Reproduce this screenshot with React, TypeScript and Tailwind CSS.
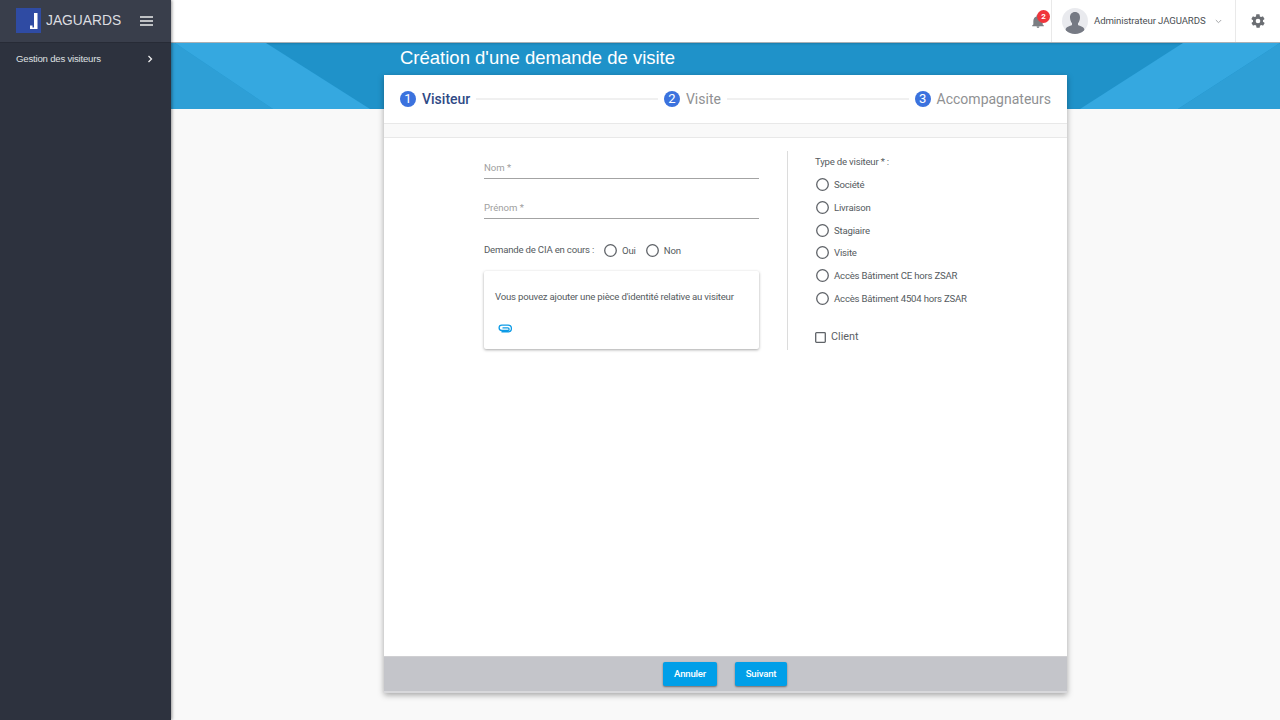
import React from "react";

const roboto = "font-['Roboto',sans-serif]";

function Radio({ label }: { label: string }) {
  return (
    <label className="flex items-center gap-[5px]">
      <svg width="13" height="13" viewBox="0 0 13 13" className="shrink-0">
        <circle cx="6.500" cy="6.500" r="5.800" fill="#fff" stroke="#5f6368" strokeWidth="1.300" />
      </svg>
      <span className="text-[9.6px] leading-[13px] tracking-[-0.2px] text-[#555b60]">{label}</span>
    </label>
  );
}

function Step({ n, label, active }: { n: number; label: string; active?: boolean }) {
  return (
    <div className="flex items-center gap-[6px] shrink-0">
      <span className="w-4 h-4 rounded-full bg-[#3b72de] text-white text-[13px] flex items-center justify-center">{n}</span>
      <span className={active ? "text-[14px] font-medium text-[#2f4a86]" : "text-[14px] text-[#8f9193]"}>{label}</span>
    </div>
  );
}

function Field({ label }: { label: string }) {
  return (
    <div className="h-[28px] border-b border-[#a3a3a3] flex items-end pb-[3px] text-[9.6px] text-[#a0a0a0]">{label}</div>
  );
}

export default function App() {
  return (
    <div className={`flex w-[1280px] h-[720px] overflow-hidden bg-[#f9f9f9] ${roboto}`}>
      <aside className="w-[171px] shrink-0 bg-[#2d323e] flex flex-col shadow-[1px_0_3px_rgba(0,0,0,0.4)] relative z-20 font-['Liberation_Sans',sans-serif]">
        <div className="h-[43px] bg-[#393e4b] border-b border-[#272b36] flex items-center pl-4 pr-[17px]">
          <svg width="25" height="25" viewBox="0 0 25 25" className="shrink-0 mb-[1px]">
            <rect width="25" height="25" fill="#2f4ba3" />
            <path d="M18 5h3.500v16H14v-3.500h2.500v2h1.500z" fill="#fff" />
          </svg>
          <span className="ml-[5px] text-[13.8px] text-[#dcdde0]">JAGUARDS</span>
          <svg width="14" height="10" viewBox="0 0 14 10" className="ml-auto">
            <path d="M0 1h13M0 5h13M0 9h13" stroke="#eceded" strokeWidth="1.500" />
          </svg>
        </div>
        <div className="h-[31px] flex items-center pl-4 pr-[18px] pt-[1px] text-[9.6px] tracking-[-0.2px] text-[#dfe0e2] justify-between">
          <span>Gestion des visiteurs</span>
          <svg width="6" height="8" viewBox="0 0 6 8"><path d="M1.500 1l3 3-3 3" fill="none" stroke="#eee" strokeWidth="1.300" /></svg>
        </div>
      </aside>

      <div className="flex-1 min-w-0 flex flex-col">
        <header className="h-[43px] shrink-0 bg-white border-b border-[#a9b0b5] flex justify-end items-stretch">
          <div className="flex items-center pr-[4px]">
            <div className="relative w-4 h-4">
              <svg width="14" height="15" viewBox="0 0 24 24" className="absolute left-0 top-[1px]" fill="#7a7d82">
                <path d="M12 23a2.500 2.500 0 0 0 2.500-2.500h-5A2.500 2.500 0 0 0 12 23zm8-6v-6c0-3.700-2.100-6.800-5.500-7.600V2.500a2.500 2.500 0 0 0-5 0v.9C6.100 4.200 4 7.300 4 11v6l-2 2v1h20v-1z" />
              </svg>
              <span className="absolute left-[6px] -top-[3px] w-[13px] h-[13px] rounded-full bg-[#f0353b] text-white text-[8px] font-bold flex items-center justify-center">2</span>
            </div>
          </div>
          <div className="w-[184px] border-l border-[#e9e9e9] flex items-center pl-[10px]">
            <svg width="26" height="26" viewBox="0 0 26 26" className="shrink-0">
              <clipPath id="c"><circle cx="13" cy="13" r="13" /></clipPath>
              <g clipPath="url(#c)">
                <rect width="26" height="26" fill="#e9eaee" />
                <path d="M13 4c3.300 0 5 2.300 5 5.500 0 2.500-1 4.500-2 5.700v1.800c2 1 6.500 2 6.500 5v4h-19v-4c0-3 4.500-4 6.500-5v-1.800c-1-1.200-2-3.200-2-5.700C8 6.300 9.700 4 13 4z" fill="#767a84" />
              </g>
            </svg>
            <span className="ml-[6px] text-[9.6px] tracking-[-0.1px] text-[#4b4f54] whitespace-nowrap">Administrateur JAGUARDS</span>
            <svg width="7" height="5" viewBox="0 0 7 5" className="ml-[10px]"><path d="M.8 1l2.700 2.700L6.200 1" fill="none" stroke="#a5a7aa" strokeWidth="1" /></svg>
          </div>
          <div className="w-[45px] border-l border-[#e9e9e9] flex items-center justify-center pr-[1px]">
            <svg width="16" height="16" viewBox="0 0 24 24" fill="#6b6e73">
              <path d="M19.400 13c.1-.3.100-.7.100-1s0-.7-.1-1l2.100-1.600c.2-.2.200-.4.100-.6l-2-3.500c-.1-.2-.4-.3-.6-.2l-2.500 1c-.5-.4-1.100-.7-1.700-1l-.4-2.600c0-.3-.2-.5-.5-.5h-4c-.3 0-.5.200-.5.400l-.4 2.700c-.6.200-1.200.6-1.700 1l-2.500-1c-.2-.1-.5 0-.6.200l-2 3.500c-.1.200-.1.500.1.600L4.600 11c0 .3-.1.700-.1 1s0 .7.100 1l-2.100 1.600c-.2.200-.2.400-.1.600l2 3.500c.1.200.4.300.6.200l2.500-1c.5.400 1.100.7 1.700 1l.4 2.600c0 .3.200.5.500.5h4c.3 0 .5-.2.500-.4l.4-2.700c.6-.2 1.200-.6 1.700-1l2.500 1c.2.100.5 0 .6-.2l2-3.500c.1-.2.100-.5-.1-.6zM12 15.500a3.500 3.500 0 1 1 0-7 3.500 3.500 0 0 1 0 7z" />
            </svg>
          </div>
        </header>

        <div className="relative h-[66px] shrink-0 bg-[#1f92c9] shadow-[inset_0_1px_2px_rgba(0,0,0,0.15)]">
          <svg width="1109" height="66" viewBox="0 0 1109 66" className="absolute inset-0">
            <polygon points="0,0 4,0 102,66 0,66" fill="#2e9fd6" />
            <polygon points="4,0 95,0 199,66 102,66" fill="#35a8e0" />
            <polygon points="1012,0 1109,0 1007,66 909,66" fill="#35a8e0" />
            <polygon points="1109,0 1109,66 1007,66" fill="#2e9fd6" />
          </svg>
          <h1 className="relative pl-[229px] pt-[3px] text-[18.5px] leading-[24px] text-white font-['Liberation_Sans',sans-serif]">
            Création d'une demande de visite
          </h1>
        </div>

        <main className="flex-1 min-h-0 flex justify-center">
          <section className="relative w-[683px] h-[618px] -mt-[34px] bg-white shadow-[0_2px_6px_rgba(0,0,0,0.35)] flex flex-col">
            <div className="h-[49px] shrink-0 flex items-center pl-4 pr-4 border-b border-[#e8e8e8]">
              <Step n={1} label="Visiteur" active />
              <div className="flex-1 h-[2px] bg-[#f0f0f0] mx-[6px]" />
              <Step n={2} label="Visite" />
              <div className="flex-1 h-[2px] bg-[#f0f0f0] mx-[6px]" />
              <Step n={3} label="Accompagnateurs" />
            </div>
            <div className="h-[14px] shrink-0 bg-[#f9f9f9] border-b border-[#e8e8e8]" />

            <div className="flex-1 min-h-0 flex pl-[100px] pt-[13px]">
              <div className="w-[275px] shrink-0">
                <Field label="Nom *" />
                <div className="mt-3"><Field label="Prénom *" /></div>
                <div className="mt-[23px] flex items-center h-4">
                  <span className="text-[9.6px] tracking-[-0.2px] text-[#555b60]">Demande de CIA en cours :</span>
                  <div className="ml-[10px]"><Radio label="Oui" /></div>
                  <div className="ml-[10px]"><Radio label="Non" /></div>
                </div>
                <div className="mt-[13px] h-[78px] bg-white rounded-[2px] shadow-[0_1px_3px_rgba(0,0,0,0.35)] pl-[11px] pt-[19px]">
                  <p className="text-[9.6px] leading-[13px] tracking-[-0.2px] text-[#555b60] whitespace-nowrap">Vous pouvez ajouter une pièce d'identité relative au visiteur</p>
                  <svg width="14" height="9" viewBox="0 0 14 9" className="mt-[21px] ml-[3px]" fill="none" stroke="#0d9be6" strokeWidth="1.300" strokeLinecap="round">
                    <path d="M4 7.900H10a3.400 3.400 0 0 0 0-6.800H3.800a2.700 2.700 0 0 0 0 5.400H9.800a1.300 1.300 0 0 0 0-2.600H5" />
                  </svg>
                </div>
              </div>

              <div className="ml-[28px] w-px h-[199px] bg-[#dcdcdc]" />

              <div className="ml-[27px] flex-1">
                <div className="text-[9.6px] leading-[13px] tracking-[-0.2px] text-[#555b60] pt-[4px]">Type de visiteur * :</div>
                <div className="mt-[10px] ml-[1px] flex flex-col gap-[9.8px]">
                  <Radio label="Société" />
                  <Radio label="Livraison" />
                  <Radio label="Stagiaire" />
                  <Radio label="Visite" />
                  <Radio label="Accès Bâtiment CE hors ZSAR" />
                  <Radio label="Accès Bâtiment 4504 hors ZSAR" />
                </div>
                <label className="mt-[24px] flex items-center gap-[5px]">
                  <svg width="11" height="11" viewBox="0 0 11 11" className="shrink-0">
                    <rect x="0.700" y="0.700" width="9.600" height="9.600" rx="0.800" fill="none" stroke="#5f6368" strokeWidth="1.300" />
                  </svg>
                  <span className="text-[10.8px] text-[#5b6065]">Client</span>
                </label>
              </div>
            </div>

            <div className="h-[37px] shrink-0 bg-[#c4c5ca] flex items-center justify-center gap-[18px] pr-[1px] border-t border-[#cfcfd2] border-b-2 border-b-[#d8d8db]">
              <button className="w-[54px] h-[24px] rounded-[2px] bg-[#009fe8] text-white text-[9.6px] tracking-[-0.2px] font-medium shadow-[0_1px_2px_rgba(0,0,0,0.45)]">Annuler</button>
              <button className="w-[52px] h-[24px] rounded-[2px] bg-[#009fe8] text-white text-[9.6px] tracking-[-0.2px] font-medium shadow-[0_1px_2px_rgba(0,0,0,0.45)]">Suivant</button>
            </div>
          </section>
        </main>
      </div>
    </div>
  );
}
